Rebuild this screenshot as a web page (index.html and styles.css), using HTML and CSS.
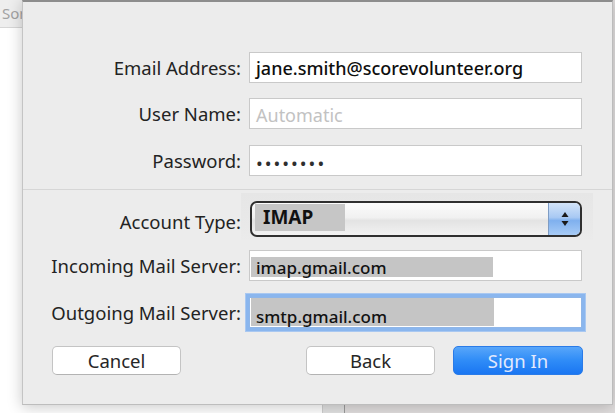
FILE: index.html
```html
<!DOCTYPE html>
<html>
<head>
<meta charset="utf-8">
<link rel="stylesheet" href="styles.css">
</head>
<body>
<div class="screen">
  <div class="bgwin">
    <aside class="sidebar">
      <div class="sidebar-head">Sort</div>
      <div class="sidebar-body"></div>
    </aside>
    <div class="mid"></div>
    <div class="rest"></div>
  </div>

  <div class="dialog">
    <div class="row">
      <label class="label">Email Address:</label>
      <div class="field"><span class="value">jane.smith@scorevolunteer.org</span></div>
    </div>
    <div class="row r-user">
      <label class="label">User Name:</label>
      <div class="field"><span class="placeholder">Automatic</span></div>
    </div>
    <div class="row r-pass">
      <label class="label">Password:</label>
      <div class="field"><span class="dots">••••••••</span></div>
    </div>

    <div class="sep"></div>

    <div class="row r-type">
      <label class="label label-type">Account Type:</label>
      <div class="popup-wrap">
        <div class="popup">
          <span class="popup-value">IMAP</span>
          <span class="stepper">
            <svg width="10" height="18" viewBox="0 0 10 18"><path d="M5 2 L8.5 7 L1.5 7 Z" fill="#1a1a1a"/><path d="M1.5 11 L8.5 11 L5 16 Z" fill="#1a1a1a"/></svg>
          </span>
        </div>
      </div>
    </div>
    <div class="row r-in">
      <label class="label">Incoming Mail Server:</label>
      <div class="field"><span class="hl hl-in">imap.gmail.com</span></div>
    </div>
    <div class="row r-out">
      <label class="label">Outgoing Mail Server:</label>
      <div class="field focused"><span class="hl hl-out">smtp.gmail.com</span></div>
    </div>

    <div class="buttons">
      <button class="btn">Cancel</button>
      <button class="btn btn-back">Back</button>
      <button class="btn btn-primary">Sign In</button>
    </div>
  </div>
</div>
</body>
</html>
```

FILE: styles.css
```css
html, body {
  margin: 0;
  padding: 0;
  background: #ececec;
}

.screen {
  position: relative;
  width: 615px;
  height: 413px;
  overflow: hidden;
  font-family: "Noto Sans", "Liberation Sans", sans-serif;
}

/* background window */
.bgwin {
  display: flex;
  height: 413px;
}

.sidebar {
  width: 322px;
  display: flex;
  flex-direction: column;
  border-right: 1px solid #cfcfcf;
  background: #e6e6e6;
}

.sidebar-head {
  height: 28px;
  box-sizing: border-box;
  border-bottom: 1px solid #d6d6d6;
  background: #eeeeee;
  color: #a2a2a2;
  font-size: 15px;
  line-height: 27px;
  padding-left: 2px;
}

.sidebar-body {
  flex: 1;
  background: #ffffff;
}

.mid {
  width: 21px;
  background: #e2e2e2;
  border-right: 1px solid #9c9c9c;
}

.rest {
  flex: 1;
  background: #e1dede;
}

/* sheet dialog */
.dialog {
  position: absolute;
  left: 22px;
  top: 0;
  width: 591px;
  height: 405px;
  box-sizing: border-box;
  background: #ececec;
  border-top: 2px solid #8d8d8d;
  border-left: 1px solid #c4c4c4;
  border-right: 1px solid #bcbcbc;
  border-bottom: 1px solid #bdbdbd;
  box-shadow: 0 2px 14px rgba(0, 0, 0, 0.22);
  padding-top: 50px;
}

.row {
  display: flex;
  align-items: center;
}

.r-user { margin-top: 15px; }
.r-pass { margin-top: 16px; }
.r-type { margin-top: 3px; align-items: flex-start; }
.r-in { margin-top: 10px; }
.r-out { margin-top: 16px; }

.label {
  width: 218px;
  margin-right: 8px;
  text-align: right;
  font-size: 18.5px;
  line-height: 24px;
  color: #232323;
  white-space: nowrap;
}

.label-type {
  margin-top: 17px;
}

.field {
  width: 333px;
  height: 31px;
  box-sizing: border-box;
  background: #ffffff;
  border: 1px solid #c9c9c9;
  display: flex;
  align-items: center;
  padding-left: 6px;
  font-size: 18px;
  line-height: 29px;
  color: #111;
}

.value {
  font-weight: 500;
  color: #0e0e0e;
  padding-top: 2px;
}

.placeholder {
  color: #c2c2c2;
  padding-top: 3px;
}

.dots {
  color: #2e2e2e;
  letter-spacing: 2px;
  font-size: 18px;
  padding-top: 5px;
}

.sep {
  margin-top: 13px;
  height: 1px;
  background: #d6d6d6;
}

/* popup button (pasted image area) */
.popup-wrap {
  margin-left: -8px;
  width: 352px;
  height: 47px;
  box-sizing: border-box;
  padding: 8px 0 0 9px;
  background: linear-gradient(#e6e6e6, #e9e9e9 70%, #ebebeb);
}

.popup {
  width: 332px;
  height: 36px;
  box-sizing: border-box;
  border: 2px solid #2f2f2f;
  border-radius: 7px;
  background: linear-gradient(#fbfbfb, #f1f1f1 45%, #e3e3e3 55%, #f2f2f2);
  display: flex;
  align-items: flex-start;
  overflow: hidden;
}

.popup-value {
  margin: 1px 0 0 3px;
  width: 90px;
  height: 27px;
  box-sizing: border-box;
  padding-left: 8px;
  background: #c6c6c6;
  font-weight: 700;
  font-size: 19px;
  line-height: 27px;
  color: #111;
}

.stepper {
  margin-left: auto;
  width: 31px;
  height: 100%;
  border-left: 1px solid #7e9cc4;
  background: linear-gradient(#d3e4f9, #a8c9f3 45%, #7fb0ee 55%, #a7cbf6);
  display: flex;
  align-items: center;
  justify-content: center;
}

.stepper svg {
  display: block;
}

/* highlighted server values */
.field .hl {
  display: block;
  box-sizing: border-box;
  background: #c5c5c5;
  color: #121212;
  font-weight: 500;
  font-size: 17px;
  padding-left: 5px;
}

.r-in .field,
.r-out .field {
  padding-left: 1px;
  align-items: flex-start;
}

.hl-in {
  width: 242px;
  height: 20px;
  margin-top: 6px;
  line-height: 22px;
}

.hl-out {
  width: 243px;
  height: 28px;
  margin-top: 0;
  line-height: 38px;
}

.focused {
  border-color: #8fb6e8;
  box-shadow: 0 0 0 3px #8ab6ee, 0 0 0 4px #a9c8f1;
}

/* buttons */
.buttons {
  margin-top: 18px;
  display: flex;
  padding-left: 29px;
  padding-right: 29px;
}

.btn {
  width: 129px;
  height: 29px;
  box-sizing: border-box;
  border: 1px solid #c4c4c4;
  border-bottom-color: #b3b3b3;
  border-radius: 5px;
  background: #ffffff;
  font-family: "Noto Sans", "Liberation Sans", sans-serif;
  font-size: 18.5px;
  line-height: 25px;
  color: #262626;
  padding: 0;
}

.btn-back {
  margin-left: auto;
}

.btn-primary {
  margin-left: 18px;
  width: 130px;
  border: 1px solid #2a7be8;
  background: linear-gradient(#58a6fa, #2f8cf7 50%, #1a76f2);
  color: #e2e9fd;
}
```
